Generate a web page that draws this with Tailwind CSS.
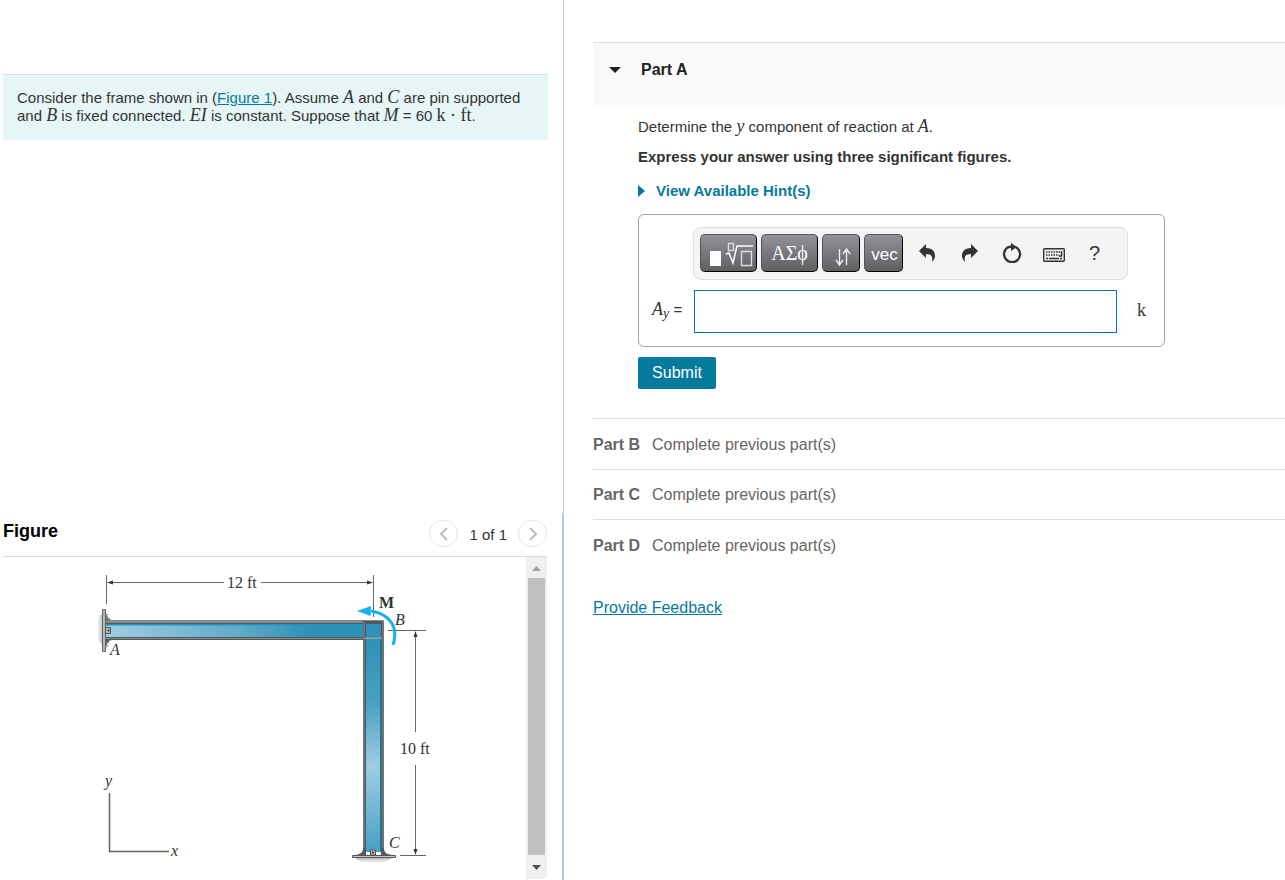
<!DOCTYPE html>
<html lang="en">
<head>
<meta charset="utf-8">
<meta name="viewport" content="width=device-width, initial-scale=1">
<title>Frame reactions</title>
<script src="https://cdn.jsdelivr.net/npm/@tailwindcss/browser@4"></script>
</head>
<body class="bg-white font-['Liberation_Sans',Arial,sans-serif] text-[15px] leading-[18px] text-[#333]">
<div class="grid min-h-screen grid-cols-[564fr_721fr]">
  <section class="flex flex-col justify-between">
    <div class="flex grow flex-col border-r border-[#b8c9dc] pt-[74px] pr-[15px] pl-[3px]">
      <p class="border-t border-[#dcdcdc] bg-[#e6f6f6] px-[14px] pt-[14px] pb-[15px]">Consider the frame shown in (<a href="#figure" class="text-[#047a9c] underline">Figure 1</a>). Assume <i class="font-['Liberation_Serif',serif] text-[18px] leading-[0]">A</i> and <i class="font-['Liberation_Serif',serif] text-[18px] leading-[0]">C</i> are pin supported<br>and <i class="font-['Liberation_Serif',serif] text-[18px] leading-[0]">B</i> is fixed connected. <i class="font-['Liberation_Serif',serif] text-[18px] leading-[0]">EI</i> is constant. Suppose that <i class="font-['Liberation_Serif',serif] text-[18px] leading-[0]">M</i> = 60 <span class="font-['Liberation_Serif',serif] text-[18px] leading-[0]">k · ft</span>.</p>
    </div>
    <div id="figure" class="border-r-2 border-[#b8c9dc] pr-[15px] pl-[3px]">
      <header class="flex h-[44px] items-center justify-between border-b border-[#dcdcdc]">
        <h2 class="pb-2 text-[18px] font-bold text-black">Figure</h2>
        <div class="flex items-center gap-[11px] pb-[2px]">
          <button aria-label="Previous figure" class="grid h-[27px] w-[29px] place-items-center rounded-full border border-[#e3e3e3]"><svg class="h-[14px] w-2" viewBox="0 0 8 14" fill="none" stroke="#bdbdbd" stroke-width="2"><path d="M7 1 1 7l6 6"/></svg></button>
          <span class="pt-[3px]">1 of 1</span>
          <button aria-label="Next figure" class="grid h-[27px] w-[29px] place-items-center rounded-full border border-[#e3e3e3]"><svg class="h-[14px] w-2" viewBox="0 0 8 14" fill="none" stroke="#bdbdbd" stroke-width="2"><path d="m1 1 6 6-6 6"/></svg></button>
        </div>
      </header>
      <div class="flex h-[323px]">
        <svg class="h-full min-w-0 grow" viewBox="3 557 523 323" preserveAspectRatio="xMinYMin meet" role="img" aria-label="Frame ABC with a 12 ft beam, a 10 ft column and moment M at B" font-family="Liberation Serif, serif" font-size="16" fill="#333">
          <defs>
            <linearGradient id="beam"><stop offset="0" stop-color="#a0cce3"/><stop offset=".5" stop-color="#65abc9"/><stop offset=".8" stop-color="#2e91b5"/></linearGradient>
            <linearGradient id="column" x1="0" y1="0" x2="0" y2="1"><stop offset="0" stop-color="#2e91b5"/><stop offset=".3" stop-color="#48a0c2"/><stop offset=".6" stop-color="#a0cce3"/><stop offset="1" stop-color="#46a0c4"/></linearGradient>
            <linearGradient id="wall"><stop offset="0" stop-color="#fff"/><stop offset="1" stop-color="#b5b8ba"/></linearGradient>
            <linearGradient id="ground" x1="0" y1="0" x2="0" y2="1"><stop offset="0" stop-color="#b5b8ba"/><stop offset="1" stop-color="#fff"/></linearGradient>
          </defs>
          <g stroke="#666" stroke-width="1" fill="none">
            <path d="M106.500 575v29M373.500 575v42M108 582.500H224M261 582.500h110M388 630.500h38M415.500 634v98M415.500 765v88M400 855.500h26"/>
            <path d="M109.500 793v58.500H169" stroke-width="1.500"/>
          </g>
          <path d="m107 582.500 6-2v4zM373 582.500l-6-2v4zM415.500 631l-2 6h4zM415.500 855l-2-6h4z"/>
          <path d="M103 613q-6 3-6 16t6 17z" fill="url(#wall)"/>
          <path d="M106 612c1 5 3 8 6 8v20c-3 0-5 3-6 9z" fill="#555b5e"/>
          <path d="M106 615h3M106 618h4M106 643h4M106 646h3" stroke="#aaa"/>
          <path d="M102.500 609.500h3v42h-3z" fill="#b5b8ba" stroke="#666"/>
          <path d="M106 620h278v20H106z" fill="#50585c"/>
          <path d="M106 620h278v3H106z" fill="#858b8e"/>
          <path d="M106 638h258v1H106z" fill="#858b8e"/>
          <path d="M106 624h258v13H106z" fill="url(#beam)"/>
          <path d="M106 624h258v1.500H106z" fill="#2095b9"/>
          <path d="M363 621h21v231h-21z" fill="#50585c"/>
          <path d="M366 638h15v214h-15z" fill="url(#column)"/>
          <path d="M380 638h1.500v214H380z" fill="#197c9e"/>
          <path d="M364 622v230M383 621v231" stroke="#8a9194"/>
          <path d="M366 624h15v13h-15z" fill="#2e91b5"/>
          <path d="M365 638h17" stroke="#c0c7ca"/>
          <path d="M105.500 627.500h5v6h-5z" fill="#b5b8ba" stroke="#555"/><circle cx="108.500" cy="630.500" r="1"/>
          <path d="M355 858q4 5 18 5t19-5z" fill="url(#ground)"/>
          <path d="M356 855c5-1 7-3 7-7h3v7zM392 855c-6-1-8-3-8-7h-3v7z" fill="#555b5e"/>
          <path d="M352.500 855.500h43v2h-43z" fill="#c6c8c8" stroke="#555"/>
          <path d="M370.500 855v-5h5v5z" fill="#b5b8ba" stroke="#555"/><circle cx="373" cy="852.500" r="1"/>
          <path d="M371 611q18 3 23 17 2 8-1 17" fill="none" stroke="#16b1ec" stroke-width="3"/>
          <path d="m357 611 14-5-.5 10z" fill="#16b1ec"/>
          <text x="227" y="588">12 ft</text>
          <text x="379" y="608" font-weight="bold">M</text>
          <g font-style="italic"><text x="395" y="625">B</text><text x="110" y="655">A</text><text x="389" y="848">C</text><text x="105" y="786">y</text><text x="171" y="856">x</text></g>
          <text x="400" y="754">10 ft</text>
        </svg>
        <div class="mb-px flex w-[21px] shrink-0 flex-col items-center bg-[#f0f0f0]" aria-hidden="true">
          <svg class="h-[21px] w-[21px] shrink-0" viewBox="0 0 21 21"><path d="m6 14 4.500-5 4.500 5z" fill="#a0a0a0"/></svg>
          <div class="w-[17px] grow bg-[#c0c0c0]"></div>
          <svg class="h-6 w-[21px] shrink-0" viewBox="0 0 21 24"><path d="m6 10 4.500 5 4.500-5z" fill="#505050"/></svg>
        </div>
      </div>
    </div>
  </section>

  <main class="pt-[42px] pl-[29px]">
    <header class="h-[65px] border-t border-[#dcdcdc] bg-[#f9f9f9] pt-[18px] pl-4">
      <button class="flex items-center gap-[20px] text-[16px] font-bold text-[#222]"><svg class="h-[6px] w-3" viewBox="0 0 12 6"><path d="M0 0h12L6 6z" fill="#222"/></svg>Part A</button>
    </header>
    <div class="pt-[11px] pl-[45px]">
      <p>Determine the <i class="font-['Liberation_Serif',serif] text-[18px] leading-[0]">y</i> component of reaction at <i class="font-['Liberation_Serif',serif] text-[18px] leading-[0]">A</i>.</p>
      <p class="mt-3 font-bold">Express your answer using three significant figures.</p>
      <button class="mt-4 flex items-center gap-[11px] font-bold text-[#047a9c]"><svg class="h-3 w-[7px]" viewBox="0 0 7 12"><path d="m0 0 7 6-7 6z" fill="#047a9c"/></svg>View Available Hint(s)</button>
      <div class="mt-[14px] mr-[120px] rounded-[6px] border border-[#a5a5a5] pt-3 pb-[13px]">
        <div class="mr-9 ml-[54px] flex h-[53px] items-center rounded-lg border border-[#dedede] bg-[#f4f4f4] pb-px pl-[6px]">
          <div class="flex gap-1">
            <button aria-label="Templates" class="h-[38px] w-[57px] rounded-[5px] border border-t-[#55555a] border-r-black border-b-black border-l-[#55555a] bg-linear-to-b from-[#92929b] to-[#606062]">
              <svg class="h-full w-full" viewBox="0 0 55 36" fill="none" stroke="#fff"><path d="M9 16h11v15H9z" fill="#fff" stroke="none"/><path d="M27.500 8.500h5v7h-5zM40.500 16.500h10v14h-10z" stroke="#ddd" stroke-width="1.400"/><path d="m25 19 3-1 4 10 4-17h16" stroke-width="1.500"/></svg></button>
            <button class="h-[38px] w-[57px] rounded-[5px] border border-t-[#55555a] border-r-black border-b-black border-l-[#55555a] bg-linear-to-b from-[#92929b] to-[#606062] font-['Liberation_Serif',serif] text-[20px] text-white">ΑΣϕ</button>
            <button aria-label="Arrows" class="h-[38px] w-[38px] rounded-[5px] border border-t-[#55555a] border-r-black border-b-black border-l-[#55555a] bg-linear-to-b from-[#92929b] to-[#606062]"><svg class="h-full w-full" viewBox="0 0 36 36" fill="none" stroke="#eee" stroke-width="1.400"><path d="M16.500 14v15M13 25l3.500 5 3.500-5M23.500 30V15M20 19l3.500-5 3.500 5"/></svg></button>
            <button class="h-[38px] w-[39px] rounded-[5px] border border-t-[#55555a] border-r-black border-b-black border-l-[#55555a] bg-linear-to-b from-[#92929b] to-[#606062] pt-1 pl-[2px] text-[17px] text-white">vec</button>
          </div>
          <div class="ml-4 flex items-center gap-[27px]">
            <button aria-label="Undo"><svg class="h-[18px] w-4" viewBox="0 0 16 18"><path d="M7 0v4c7 0 9 4 9 8 0 2-1 4-3 6 1-5 0-8-6-8v4L0 7z" fill="#333"/></svg></button>
            <button aria-label="Redo"><svg class="h-[18px] w-4" viewBox="0 0 16 18"><path d="M9 0v4c-7 0-9 4-9 8 0 2 1 4 3 6-1-5 0-8 6-8v4l7-7z" fill="#333"/></svg></button>
            <button aria-label="Reset" class="-mx-[3px]"><svg class="h-5 w-5" viewBox="0 0 20 20"><path d="M14 4.200a8 8 0 1 1-7.500-.2L10 3.500" fill="none" stroke="#333" stroke-width="2.300"/><path d="M9 0v8l6-4z" fill="#333"/></svg></button>
            <button aria-label="Keyboard" class="-mx-[3px] pt-1"><svg class="h-[14px] w-[22px]" viewBox="0 0 22 14" fill="none" stroke="#333"><rect x=".7" y=".7" width="20.600" height="12.600" rx="1" stroke-width="1.400"/><path d="M3 4h15M3 7h13" stroke-width="1.600" stroke-dasharray="1.500 1"/><path d="M3 10.500h2M6 10.500h10M17 10.500h2M18.500 3v5H16" stroke-width="1.500"/></svg></button>
            <button class="text-[20px]" aria-label="Help">?</button>
          </div>
        </div>
        <div class="mt-[10px] flex items-center pl-[13px]">
          <label for="answer" class="w-[42px] shrink-0 pb-1 whitespace-nowrap"><i class="font-['Liberation_Serif',serif] text-[18px] leading-[0]">A<sub class="text-[14px]">y</sub></i> =</label>
          <input id="answer" type="text" class="h-[43px] min-w-0 grow border border-[#047a9c] bg-white px-2 outline-none">
          <span class="w-[47px] shrink-0 pb-1 pl-5 font-['Liberation_Serif',serif] text-[18px]">k</span>
        </div>
      </div>
      <button class="mt-[10px] h-8 w-[78px] rounded-[2px] bg-[#047a9c] text-[16px] text-white">Submit</button>
    </div>
    <div class="mt-[29px] text-[16px] text-[#666]">
      <div class="flex h-[51px] items-center gap-3 border-t border-[#dcdcdc] pt-px whitespace-nowrap"><b class="w-[47px]">Part B</b><span>Complete previous part(s)</span></div>
      <div class="flex h-[50px] items-center gap-3 border-t border-[#dcdcdc] whitespace-nowrap"><b class="w-[47px]">Part C</b><span>Complete previous part(s)</span></div>
      <div class="flex h-[51px] items-center gap-3 border-t border-[#dcdcdc] pt-px whitespace-nowrap"><b class="w-[47px]">Part D</b><span>Complete previous part(s)</span></div>
    </div>
    <a href="#feedback" class="mt-[29px] inline-block text-[16px] text-[#047a9c] underline">Provide Feedback</a>
  </main>
</div>
</body>
</html>
